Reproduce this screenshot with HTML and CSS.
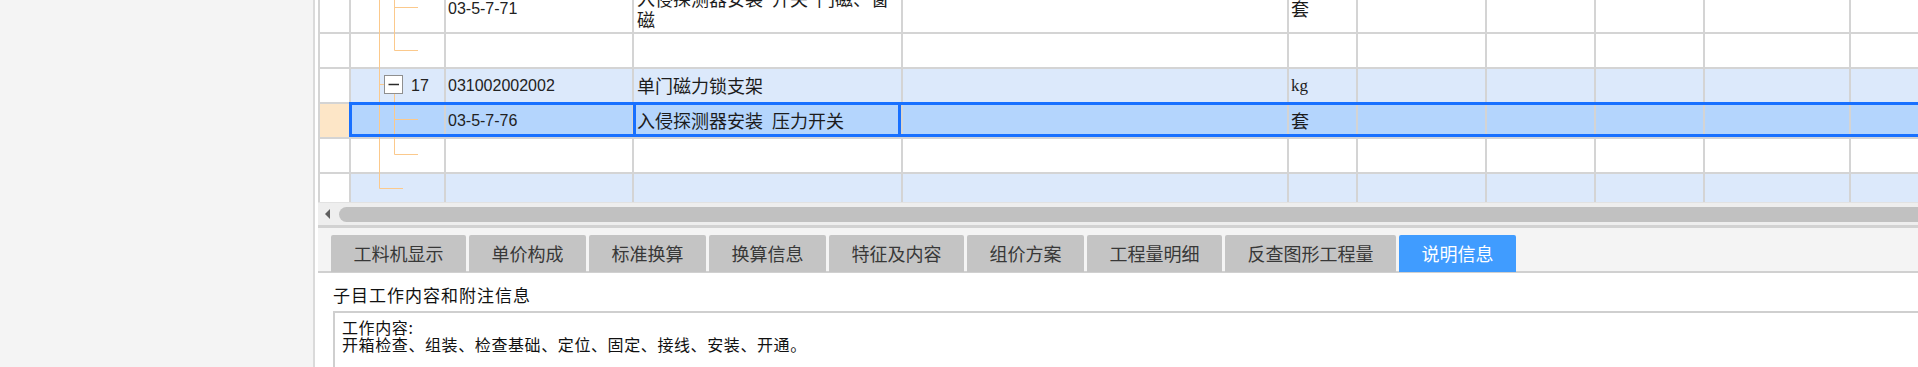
FILE: index.html
```html
<!DOCTYPE html>
<html lang="zh-CN">
<head>
<meta charset="utf-8">
<title>子目说明信息</title>
<link rel="stylesheet" href="styles.css">
</head>
<body>
<div class="app">
  <aside class="side"></aside>
  <main class="main">
    <div class="grid">
      <div class="rows">
        <div class="row tall">
          <div class="c hd"></div>
          <div class="c tree">
            <svg class="tl" width="93" height="49"><path d="M28.5 0V49M43.5 0V49M43.5 22.5H67"/></svg>
          </div>
          <div class="c code"><span class="num-t">03-5-7-71</span></div>
          <div class="c name multi"><span class="ln">入侵探测器安装&#8194;开关&#8194;门磁、窗</span><span class="ln">磁</span></div>
          <div class="c"></div>
          <div class="c unit">套</div>
          <div class="c"></div><div class="c"></div><div class="c"></div><div class="c"></div><div class="c"></div>
        </div>
        <div class="row">
          <div class="c hd"></div>
          <div class="c tree">
            <svg class="tl" width="93" height="35"><path d="M28.5 0V35M43.5 0V16.5M43.5 16.5H67"/></svg>
          </div>
          <div class="c code"></div>
          <div class="c name"></div>
          <div class="c"></div>
          <div class="c unit"></div>
          <div class="c"></div><div class="c"></div><div class="c"></div><div class="c"></div><div class="c"></div>
        </div>
        <div class="row alt">
          <div class="c hd"></div>
          <div class="c tree">
            <svg class="tl" width="93" height="35"><path d="M28.5 0V35M28.5 15.5H33.5M43.5 24.5V35"/><rect class="box" x="33.5" y="6.5" width="18" height="18"/><path class="minus" d="M37.5 15.5H48"/></svg>
            <span class="num-t num">17</span>
          </div>
          <div class="c code"><span class="num-t">031002002002</span></div>
          <div class="c name">单门磁力锁支架</div>
          <div class="c"></div>
          <div class="c unit"><span class="serif">kg</span></div>
          <div class="c"></div><div class="c"></div><div class="c"></div><div class="c"></div><div class="c"></div>
        </div>
        <div class="row sel">
          <div class="c hd"></div>
          <div class="c tree">
            <svg class="tl" width="93" height="35"><path d="M28.5 0V35M43.5 0V35M43.5 15.5H67"/></svg>
          </div>
          <div class="c code"><span class="num-t">03-5-7-76</span></div>
          <div class="c name active">入侵探测器安装&#8194;压力开关</div>
          <div class="c"></div>
          <div class="c unit">套</div>
          <div class="c"></div><div class="c"></div><div class="c"></div><div class="c"></div><div class="c"></div>
        </div>
        <div class="row">
          <div class="c hd"></div>
          <div class="c tree">
            <svg class="tl" width="93" height="35"><path d="M28.5 0V35M43.5 0V15.5M43.5 15.5H67"/></svg>
          </div>
          <div class="c code"></div>
          <div class="c name"></div>
          <div class="c"></div>
          <div class="c unit"></div>
          <div class="c"></div><div class="c"></div><div class="c"></div><div class="c"></div><div class="c"></div>
        </div>
        <div class="row alt">
          <div class="c hd"></div>
          <div class="c tree">
            <svg class="tl" width="93" height="35"><path d="M28.5 0V14.5M28.5 14.5H52"/></svg>
          </div>
          <div class="c code"></div>
          <div class="c name"></div>
          <div class="c"></div>
          <div class="c unit"></div>
          <div class="c"></div><div class="c"></div><div class="c"></div><div class="c"></div><div class="c"></div>
        </div>
      </div>
    </div>

    <div class="hscroll">
      <span class="arrow"></span>
      <span class="thumb"></span>
    </div>

    <div class="tabbar">
      <div class="tab">工料机显示</div>
      <div class="tab">单价构成</div>
      <div class="tab">标准换算</div>
      <div class="tab">换算信息</div>
      <div class="tab">特征及内容</div>
      <div class="tab">组价方案</div>
      <div class="tab">工程量明细</div>
      <div class="tab">反查图形工程量</div>
      <div class="tab on">说明信息</div>
    </div>

    <div class="panel">
      <div class="ptitle">子目工作内容和附注信息</div>
      <div class="pbox">
        <div>工作内容:</div>
        <div>开箱检查、组装、检查基础、定位、固定、接线、安装、开通。</div>
      </div>
    </div>
  </main>
</div>
</body>
</html>
```
FILE: styles.css
```css
* { box-sizing: border-box; }
html, body { margin: 0; padding: 0; }
body {
  width: 1918px;
  height: 367px;
  overflow: hidden;
  background: #fff;
  font-family: "Noto Sans CJK SC", "Noto Sans", sans-serif;
  color: #1c1c1c;
}
.app { display: flex; height: 367px; }
.side {
  width: 315px;
  flex: none;
  background: #f4f4f4;
  border-right: 2px solid #dadada;
}
.main {
  flex: 1;
  min-width: 0;
  padding-left: 3px;
  display: flex;
  flex-direction: column;
  overflow: hidden;
  background: #fff;
}

/* grid */
.grid { height: 202px; flex: none; overflow: hidden; }
.rows { margin-top: -15px; width: 1693px; }
.row {
  display: grid;
  grid-template-columns: 33px 95px 188px 269px 386px 69px 129px 109px 109px 146px 160px;
  height: 35px;
  position: relative;
}
.row.tall { height: 49px; }
.c {
  position: relative;
  display: flex;
  align-items: center;
  border-right: 2px solid #d4d4d4;
  border-bottom: 2px solid #d4d4d4;
  font-size: 18px;
  line-height: 21px;
  white-space: nowrap;
  background: #fff;
}
.hd { border-left: 2px solid #d4d4d4; }
.row.alt .c:not(.hd) { background: #dce9fb; }
.row.sel .c:not(.hd) { background: #b4d5fd; }
.row.sel .hd { background: #fde6c7; }
.row.sel::after {
  content: "";
  position: absolute;
  left: 31px;
  right: -10px;
  top: -2px;
  bottom: 2px;
  border: 3px solid #1870ff;
  border-right: none;
  z-index: 2;
  pointer-events: none;
}
.c.name.active { background: #fff; }
.c.name.active::after {
  content: "";
  position: absolute;
  left: -1px;
  right: 0;
  top: -2px;
  bottom: 0;
  border: 3px solid #1870ff;
  z-index: 2;
}

.num-t { font-family: "Liberation Sans", "DejaVu Sans", sans-serif; font-size: 16px; color: #222; }
.serif { font-family: "Liberation Serif", serif; font-size: 17px; }
.code { padding-left: 2px; }
.name { padding-left: 3px; }
.name.multi { flex-direction: column; align-items: flex-start; justify-content: center; }
.ln { display: block; }
.unit { padding-left: 2px; }

.tree { padding-left: 60px; }
.tl { position: absolute; left: 0; top: 0; overflow: visible; }
.tl path { fill: none; stroke: #fbc98c; stroke-width: 1; }
.tl .box { fill: #fff; stroke: #8f8f8f; stroke-width: 1; }
.tl path.minus { stroke: #2a2a2a; stroke-width: 1.5; }
.num { position: relative; }

/* scrollbar */
.hscroll {
  height: 26px;
  flex: none;
  display: flex;
  align-items: center;
  background: #eeeeee;
  border-top: 1px solid #e2e2e2;
  border-bottom: 3px solid #d2d2d2;
  padding-left: 7px;
  overflow: hidden;
}
.arrow {
  width: 0;
  height: 0;
  border-top: 5px solid transparent;
  border-bottom: 5px solid transparent;
  border-right: 5px solid #5f5f5f;
}
.thumb {
  flex: 1;
  height: 15px;
  margin-left: 9px;
  margin-right: -20px;
  border-radius: 8px;
  background: #c1c1c1;
}

/* tabs */
.tabbar {
  height: 45px;
  flex: none;
  display: flex;
  align-items: flex-end;
  gap: 3px;
  padding-left: 13px;
  background: #f4f4f4;
  border-bottom: 2px solid #d0d0d0;
}
.tab {
  height: 37px;
  margin-bottom: -1px;
  padding: 0 22.5px;
  background: #c4c4c4;
  color: #383838;
  font-size: 18px;
  line-height: 37px;
  white-space: nowrap;
  border-radius: 2px 2px 0 0;
}
.tab.on { background: #409cff; color: #fff; }

/* panel */
.panel { flex: 1; padding: 11px 0 0 15px; }
.ptitle { font-size: 17px; letter-spacing: 1px; line-height: 22px; color: #111; }
.pbox {
  margin-top: 5px;
  margin-right: -10px;
  height: 80px;
  padding: 6px 0 0 7px;
  border: 2px solid #cfcfcf;
  font-size: 16px;
  letter-spacing: 0.6px;
  line-height: 17px;
  color: #111;
}
```
